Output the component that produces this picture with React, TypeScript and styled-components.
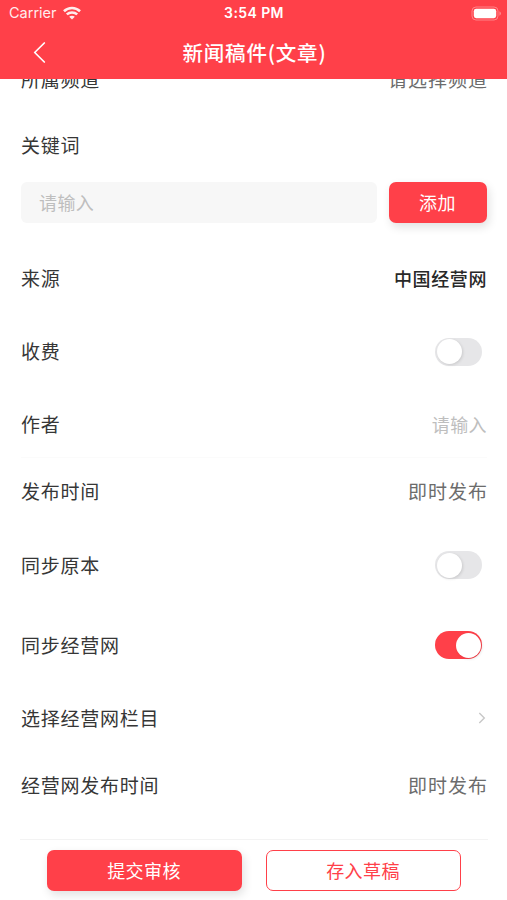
import React, { useState } from 'react'
import styled, { createGlobalStyle, ThemeProvider } from 'styled-components'

const theme = {
    primary: '#ff4049',
    text1: '#363636',
    text2: '#6c6c6c',
    text3: '#bebebe',
    bg1: '#ffffff',
    bg2: '#f7f7f7',
    divider: '#f3f3f3',
    shadow: '2px 4px 10px rgba(0, 0, 0, 0.12)'
}

const GlobalStyle = createGlobalStyle`
    * {
        box-sizing: border-box;
    }
    body {
        margin: 0;
        background: #ffffff;
        font-family: 'Noto Sans CJK SC', sans-serif;
    }
    button, input {
        font-family: inherit;
    }
`

const Screen = styled.div`
    display: flex;
    flex-direction: column;
    width: 507px;
    height: 900px;
    overflow: hidden;
    background: ${({ theme }) => theme.bg1};
`

const Header = styled.header`
    flex: none;
    height: 79px;
    color: #fff;
    background: ${({ theme }) => theme.primary};
`

const StatusBar = styled.div`
    display: grid;
    grid-template-columns: 1fr auto 1fr;
    align-items: center;
    height: 27px;
    padding: 0 5px 0 9px;
    font-family: Inter, sans-serif;
    line-height: 26px;
`

const Carrier = styled.div`
    display: flex;
    align-items: center;
    gap: 6px;
    padding-bottom: 1px;
    font-size: 14.5px;
    opacity: 0.9;
`

const Time = styled.div`
    padding-right: 3px;
    padding-bottom: 1px;
    font-size: 14px;
    font-weight: 600;
    letter-spacing: 0.4px;
`

const Battery = styled.svg`
    justify-self: end;
`

const NavBar = styled.div`
    display: grid;
    grid-template-columns: 80px 1fr 80px;
    align-items: center;
    height: 52px;
`

const BackButton = styled.button`
    display: flex;
    width: 60px;
    padding: 0 0 2px 33px;
    border: 0;
    color: inherit;
    background: none;
`

const Title = styled.h1`
    margin: 0;
    padding: 0 0 2px 2px;
    font-size: 20.5px;
    font-weight: 500;
    line-height: 50px;
    letter-spacing: 0.8px;
    text-align: center;
    white-space: nowrap;
`

const Content = styled.main`
    display: flex;
    flex: 1;
    flex-direction: column;
    justify-content: flex-end;
    min-height: 0;
    padding: 0 20px 21px 21px;
    overflow: hidden;
`

const Row = styled.div<{ tall?: boolean; divided?: boolean }>`
    display: flex;
    flex: none;
    align-items: center;
    justify-content: space-between;
    height: ${({ tall }) => (tall ? '80px' : '66.7px')};
    border-bottom: ${({ divided }) => (divided ? '1px solid #fbfbfb' : '0')};
`

const Label = styled.span`
    color: ${({ theme }) => theme.text1};
    font-size: 19px;
    line-height: 28px;
    letter-spacing: 0.75px;
`

const Value = styled.span`
    margin-right: -1px;
    color: ${({ theme }) => theme.text2};
    font-size: 19px;
    line-height: 28px;
    letter-spacing: 1px;
`

const Source = styled.span`
    color: #282828;
    font-size: 18px;
    font-weight: 500;
    line-height: 28px;
    letter-spacing: 0.6px;
`

const AuthorInput = styled.input`
    width: 200px;
    padding: 0;
    border: 0;
    outline: none;
    color: ${({ theme }) => theme.text2};
    font-size: 18px;
    line-height: 28px;
    letter-spacing: 0.4px;
    text-align: right;
    background: none;

    &::placeholder {
        color: ${({ theme }) => theme.text3};
    }
`

const KeywordRow = styled.div`
    display: flex;
    flex: none;
    gap: 12px;
    height: 66px;
    padding: 3px 0 22px;
`

const KeywordInput = styled(AuthorInput)`
    flex: 1;
    min-width: 0;
    padding: 0 18px;
    border-radius: 6px;
    text-align: left;
    background: ${({ theme }) => theme.bg2};
`

const Button = styled.button<{ outlined?: boolean; width: number }>`
    width: ${({ width }) => width}px;
    height: 41px;
    padding: 0 1px 1px 0;
    border: ${({ theme, outlined }) => (outlined ? `1px solid ${theme.primary}` : '0')};
    border-radius: 7px;
    color: ${({ theme, outlined }) => (outlined ? theme.primary : '#fff')};
    font-size: 18px;
    letter-spacing: 0.4px;
    background: ${({ theme, outlined }) => (outlined ? theme.bg1 : theme.primary)};
    box-shadow: ${({ theme, outlined }) => (outlined ? 'none' : theme.shadow)};
`

const Toggle = styled.button<{ on: boolean }>`
    display: flex;
    align-items: center;
    justify-content: ${({ on }) => (on ? 'flex-end' : 'flex-start')};
    width: 47px;
    height: 28px;
    margin: 1px 5px 0 0;
    padding: 0 1.5px;
    border: 0;
    border-radius: 14px;
    background: ${({ theme, on }) => (on ? theme.primary : '#e6e6e8')};
`

const Knob = styled.span`
    width: 25px;
    height: 25px;
    border-radius: 50%;
    background: #fff;
    box-shadow: 1px 1px 3px rgba(0, 0, 0, 0.12);
`

const Footer = styled.footer`
    display: flex;
    flex: none;
    justify-content: center;
    gap: 24px;
    height: 61px;
    margin: 0 19px 0 20px;
    padding-top: 10px;
    border-top: 1px solid ${({ theme }) => theme.divider};
`

function WifiIcon() {
    return (
        <svg width="18" height="14" viewBox="0 0 19 14" fill="none" stroke="#fff" strokeWidth="2.7">
            <path d="M1 5.1C5.8 0.6 13.2 0.6 18 5.1" />
            <path d="M4 8.5C7.1 5.7 11.9 5.7 15 8.5" />
            <path d="M9.5 13.8L6.5 10.9C8 9.4 11 9.4 12.5 10.9Z" fill="#fff" stroke="none" />
        </svg>
    )
}

function BatteryIcon() {
    return (
        <Battery width="31" height="15" viewBox="0 0 31 15">
            <rect x="1" y="1" width="26" height="13" rx="4" fill="none" stroke="#fff" strokeOpacity="0.35" />
            <rect x="2.8" y="2.8" width="22.4" height="9.4" rx="2.4" fill="#fff" />
            <path d="M28.5 5.3C30.3 6 30.3 9 28.5 9.7Z" fill="#fff" fillOpacity="0.45" />
        </Battery>
    )
}

function Switch({ initial = false, label }: { initial?: boolean; label: string }) {
    const [on, setOn] = useState(initial)
    return (
        <Toggle role="switch" aria-checked={on} aria-label={label} on={on} onClick={() => setOn(!on)}>
            <Knob />
        </Toggle>
    )
}

export default function App() {
    return (
        <ThemeProvider theme={theme}>
            <GlobalStyle />
            <Screen>
                <Header>
                    <StatusBar>
                        <Carrier>
                            Carrier
                            <WifiIcon />
                        </Carrier>
                        <Time>3:54 PM</Time>
                        <BatteryIcon />
                    </StatusBar>
                    <NavBar>
                        <BackButton aria-label="返回">
                            <svg width="13" height="21" viewBox="0 0 13 21" fill="none" stroke="currentColor" strokeWidth="1.7">
                                <path d="M11.3 1L1.7 10.5L11.3 20" strokeLinecap="round" strokeLinejoin="round" />
                            </svg>
                        </BackButton>
                        <Title>新闻稿件(文章)</Title>
                    </NavBar>
                </Header>
                <Content>
                    <Row>
                        <Label>所属频道</Label>
                        <Value>请选择频道</Value>
                    </Row>
                    <Row>
                        <Label>关键词</Label>
                    </Row>
                    <KeywordRow>
                        <KeywordInput placeholder="请输入" />
                        <Button width={98}>添加</Button>
                    </KeywordRow>
                    <Row>
                        <Label>来源</Label>
                        <Source>中国经营网</Source>
                    </Row>
                    <Row tall>
                        <Label>收费</Label>
                        <Switch label="收费" />
                    </Row>
                    <Row divided>
                        <Label>作者</Label>
                        <AuthorInput placeholder="请输入" />
                    </Row>
                    <Row>
                        <Label>发布时间</Label>
                        <Value>即时发布</Value>
                    </Row>
                    <Row tall>
                        <Label>同步原本</Label>
                        <Switch label="同步原本" />
                    </Row>
                    <Row tall>
                        <Label>同步经营网</Label>
                        <Switch label="同步经营网" initial />
                    </Row>
                    <Row>
                        <Label>选择经营网栏目</Label>
                        <svg width="10" height="14" viewBox="0 0 10 14" fill="none" stroke="#c8c8c8" strokeWidth="1.4">
                            <path d="M2.3 2L7.3 7L2.3 12" />
                        </svg>
                    </Row>
                    <Row>
                        <Label>经营网发布时间</Label>
                        <Value>即时发布</Value>
                    </Row>
                </Content>
                <Footer>
                    <Button width={195}>提交审核</Button>
                    <Button width={195} outlined>
                        存入草稿
                    </Button>
                </Footer>
            </Screen>
        </ThemeProvider>
    )
}
